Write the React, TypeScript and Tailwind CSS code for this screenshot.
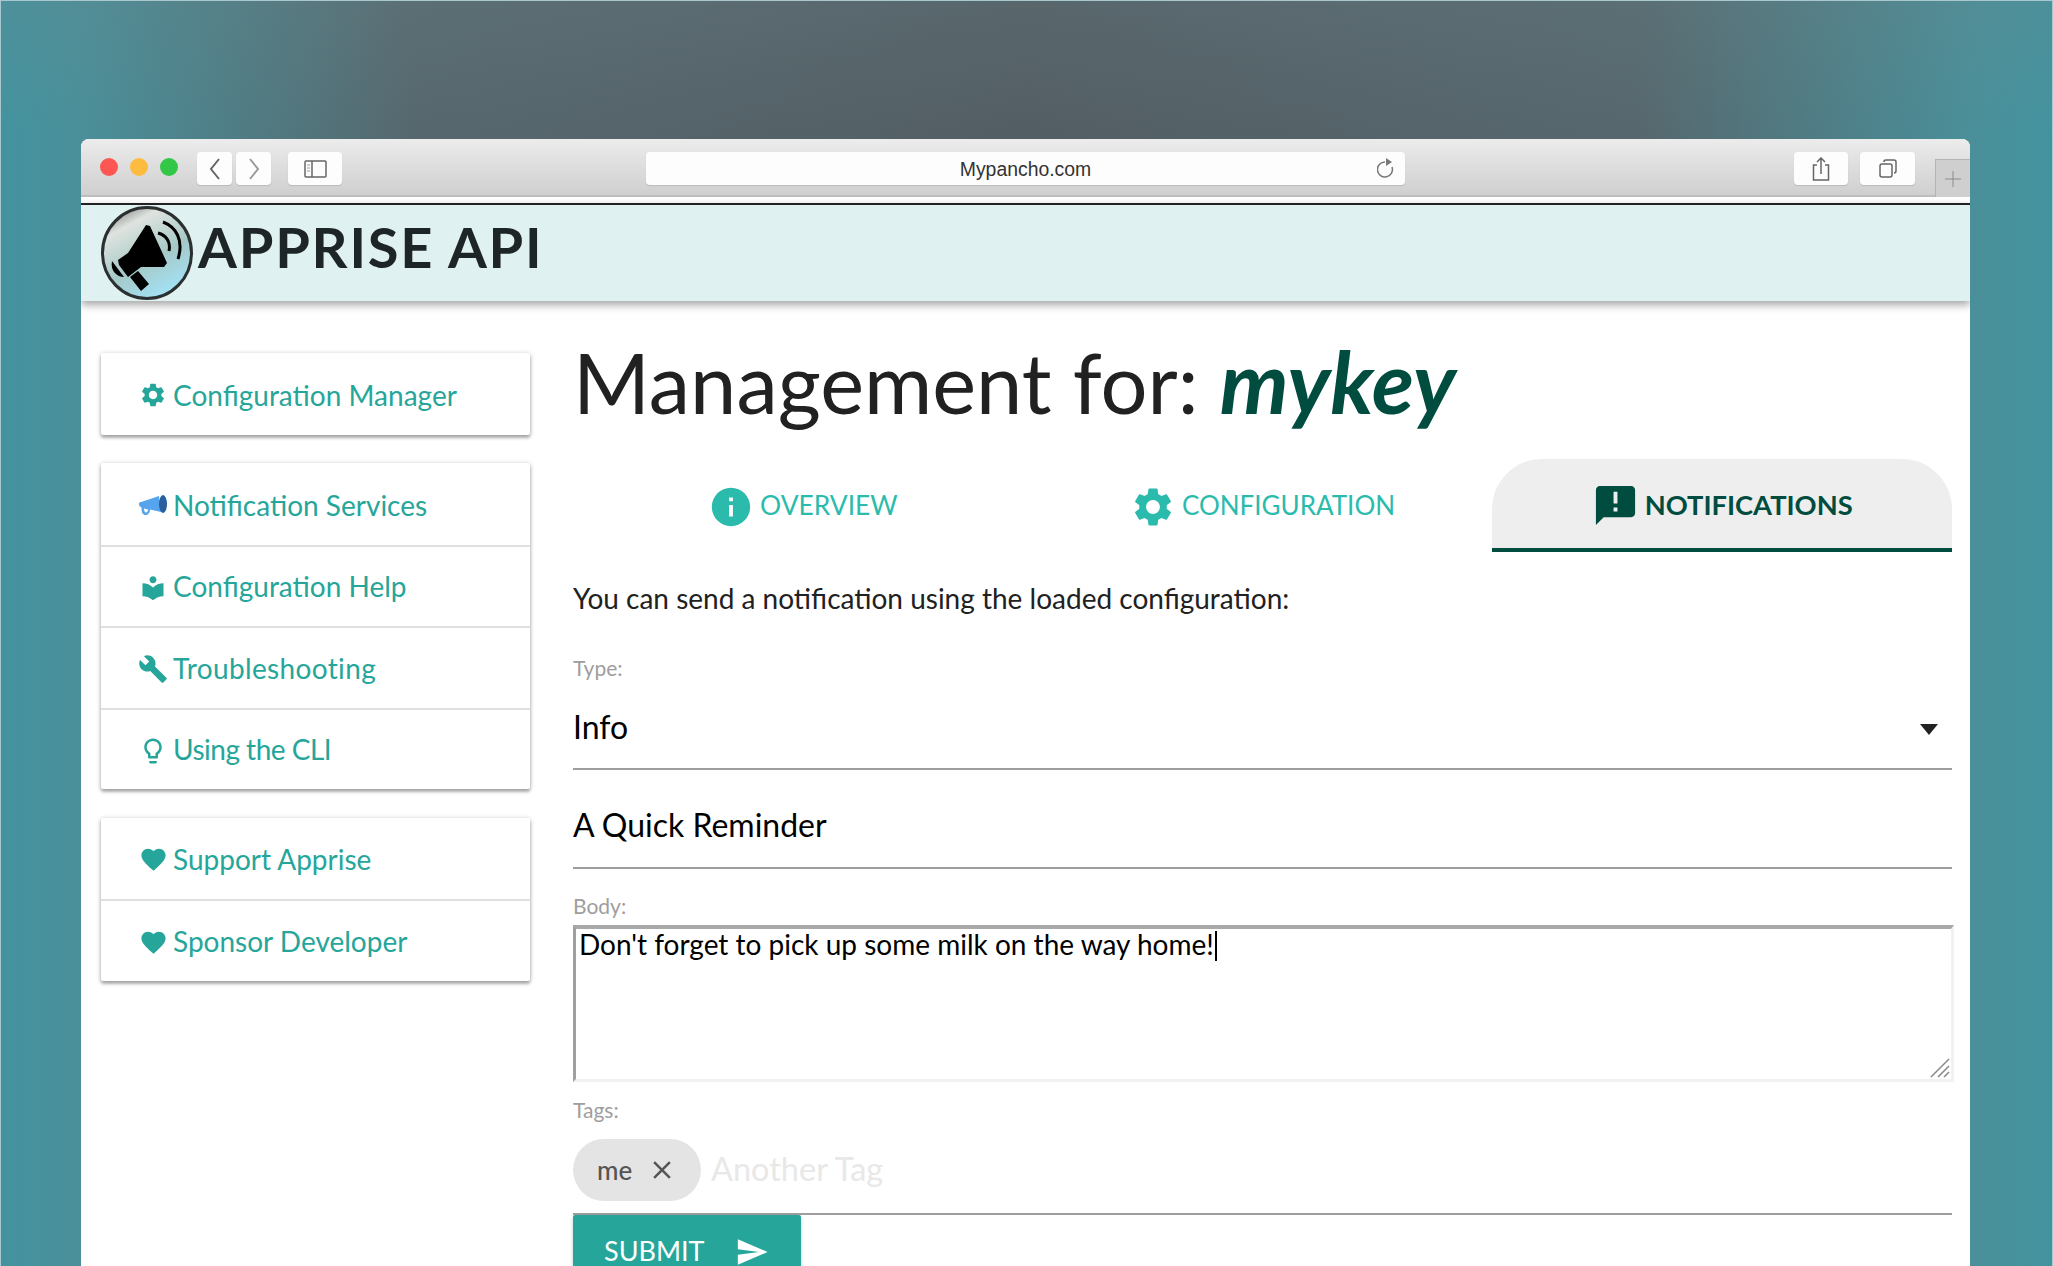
import { MdAnnouncement, MdBuild, MdClose, MdFavorite, MdInfo, MdLightbulbOutline, MdLocalLibrary, MdSend, MdSettings } from "react-icons/md";
import type { ReactNode } from "react";

function Logo() {
  return (
    <svg width="94" height="96" viewBox="0 0 94 96" className="shrink-0">
      <defs>
        <linearGradient id="lg" x1="0.15" y1="0.05" x2="0.65" y2="1">
          <stop offset="0" stopColor="#8d9290" />
          <stop offset="0.18" stopColor="#dfe3df" />
          <stop offset="0.6" stopColor="#a5c9c6" />
          <stop offset="1" stopColor="#a3e2f8" />
        </linearGradient>
      </defs>
      <ellipse cx="47" cy="48" rx="44.5" ry="45.5" fill="url(#lg)" stroke="#2b2f30" strokeWidth="3" />
      <path d="M46 20 L50 21 L67 58 L64 62 L41 62 L28 72 L19 60 L18 55 L28 48 Z" fill="#000" />
      <path d="M12 56 L24 72 C17 72 10 66 12 56 Z" fill="#000" />
      <path d="M30 72 L38 66 L49 79 L41 86 Z" fill="#000" />
      <path d="M58 28 C66 30 71 37 69 46" fill="none" stroke="#000" strokeWidth="3" />
      <path d="M63 17 C76 22 84 35 78 54" fill="none" stroke="#000" strokeWidth="3" />
    </svg>
  );
}

function Megaphone() {
  return (
    <svg width="28" height="20" viewBox="0 0 28 20" className="shrink-0">
      <path d="M0 9 C0 7.500 1 7 2 7 L20 1 L22 17 L11 14.500 C11 18 9 20 6.500 20 C4 20 2.500 18 2.500 13 L2 12 C1 12 0 11 0 9 Z" fill="#56a4ee" />
      <path d="M5 13.500 C5 16 6 17.500 7 17.500 C8 17.500 9 16.500 9 14.500" fill="#fff" />
      <ellipse cx="24" cy="9" rx="4" ry="9" fill="#27609c" />
    </svg>
  );
}

function Traffic({ color }: { color: string }) {
  return <span className={`h-[18px] w-[18px] rounded-full ${color}`} />;
}

function ChromeBtn({ className, children }: { className: string; children: ReactNode }) {
  return (
    <div className={`flex h-[33px] items-center justify-center rounded-[4px] bg-[#fdfdfd] shadow-[0_1px_1px_rgba(0,0,0,0.12)] ${className}`}>
      {children}
    </div>
  );
}

function BrowserBar() {
  return (
    <div className="flex h-[58px] items-start bg-[linear-gradient(to_bottom,#ececec,#cfcfcf)] border-b-2 border-[#bdbdbd] pl-[19px]">
      <div className="mt-[19px] flex gap-[12px]">
        <Traffic color="bg-[#fc5753]" />
        <Traffic color="bg-[#fdbc40]" />
        <Traffic color="bg-[#33c748]" />
      </div>
      <div className="ml-[19px] mt-[13px] flex gap-[4px]">
        <ChromeBtn className="w-[35px]">
          <svg width="12" height="24" viewBox="0 0 12 24" fill="none" stroke="#666" strokeWidth="2"><path d="M10 2 L2 12 L10 22" /></svg>
        </ChromeBtn>
        <ChromeBtn className="w-[35px]">
          <svg width="12" height="24" viewBox="0 0 12 24" fill="none" stroke="#999" strokeWidth="2"><path d="M2 2 L10 12 L2 22" /></svg>
        </ChromeBtn>
      </div>
      <ChromeBtn className="ml-[17px] mt-[13px] w-[54px]">
        <svg width="23" height="18" viewBox="0 0 23 18" fill="none" stroke="#666" strokeWidth="1.500">
          <rect x="1" y="1" width="21" height="16" rx="1" />
          <path d="M8 1 V17" />
          <path d="M3 5 H6 M3 8 H6 M3 11 H6" strokeWidth="1" stroke="#999" />
        </svg>
      </ChromeBtn>
      <ChromeBtn className="relative ml-[304px] mt-[13px] w-[759px]">
        <span className="mt-[2px] font-['Liberation_Sans',sans-serif] text-[19.4px] text-[#333]">Mypancho.com</span>
        <svg width="18" height="22" viewBox="0 0 18 22" fill="none" className="absolute right-[10px] top-[6px]">
          <path d="M8 4 A7.500 7.500 0 1 0 15 9" stroke="#777" strokeWidth="1.500" />
          <path d="M9 0 L15 4 L9 8 Z" fill="#777" />
        </svg>
      </ChromeBtn>
      <ChromeBtn className="ml-[389px] mt-[13px] w-[54px]">
        <svg width="18" height="24" viewBox="0 0 18 24" fill="none" stroke="#666" strokeWidth="1.500">
          <path d="M5 8 H1.500 V23 H16.500 V8 H13" />
          <path d="M9 17 V1.500 M5 5 L9 1 L13 5" />
        </svg>
      </ChromeBtn>
      <ChromeBtn className="ml-[12px] mt-[13px] w-[55px]">
        <svg width="18" height="19" viewBox="0 0 18 19" fill="none" stroke="#666" strokeWidth="1.500">
          <rect x="1" y="5" width="12" height="13" rx="2" />
          <path d="M5 3 V2.500 C5 1.500 6 1 7 1 H15 C16 1 17 2 17 3 V12 C17 13 16 14 15 14" />
        </svg>
      </ChromeBtn>
      <div className="ml-[20px] mt-[20px] flex h-[38px] w-[35px] items-center justify-center border-l border-t border-[#b4b4b4] bg-[#cfcfcf]">
        <svg width="16" height="16" viewBox="0 0 16 16" stroke="#8c8c8c" strokeWidth="1"><path d="M8 0 V16 M0 8 H16" /></svg>
      </div>
    </div>
  );
}

function NavRow({ icon, label, divider, labelClass = "" }: { icon: ReactNode; label: string; divider?: boolean; labelClass?: string }) {
  return (
    <div className={`flex h-[81.5px] items-center ${divider ? "border-t-2 border-[#e0e0e0]" : ""}`}>
      <div className="mt-[3px] flex w-[73px] shrink-0 justify-end pr-[5px]">
        <span className="flex w-[32px] justify-center text-[#26a69a]">{icon}</span>
      </div>
      <span className={`-ml-[1px] text-[28px] leading-none text-[#26a69a] ${divider ? "" : "mt-[2px]"} ${labelClass}`}>{label}</span>
    </div>
  );
}

function NavCard({ children }: { children: ReactNode }) {
  return (
    <div className="rounded-[2px] bg-white shadow-[0_3px_3px_0_rgba(0,0,0,0.22),0_1px_5px_0_rgba(0,0,0,0.28)]">
      {children}
    </div>
  );
}

function Sidebar() {
  return (
    <div className="flex w-[429px] shrink-0 flex-col gap-[28.5px] pt-[52px]">
      <NavCard>
        <NavRow icon={<MdSettings size={28} />} label="Configuration Manager" />
      </NavCard>
      <NavCard>
        <NavRow icon={<Megaphone />} label="Notification Services" />
        <NavRow divider icon={<MdLocalLibrary size={28} />} label="Configuration Help" />
        <NavRow divider icon={<MdBuild size={30} />} label="Troubleshooting" labelClass="tracking-[0.35px]" />
        <NavRow divider icon={<MdLightbulbOutline size={30} />} label="Using the CLI" labelClass="tracking-[-0.5px]" />
      </NavCard>
      <NavCard>
        <NavRow icon={<MdFavorite size={29} />} label="Support Apprise" />
        <NavRow divider icon={<MdFavorite size={29} />} label="Sponsor Developer" />
      </NavCard>
    </div>
  );
}

function Tabs() {
  return (
    <div className="grid h-[93px] grid-cols-3">
      <div className="flex items-center justify-center gap-[6px] pt-[2px] text-[#2bbbad]">
        <MdInfo size={46} />
        <span className="-mt-[3px] text-[26.4px] leading-none">OVERVIEW</span>
      </div>
      <div className="flex items-center justify-center gap-[6px] pt-[2px] text-[#2bbbad]">
        <MdSettings size={46} />
        <span className="-mt-[3px] text-[26px] leading-none">CONFIGURATION</span>
      </div>
      <div className="flex items-center justify-center gap-[6px] rounded-t-[50px] border-b-4 border-[#004d40] bg-[#eeeeee] pt-[2px] text-[#004d40]">
        <MdAnnouncement size={47} className="mt-[2px]" />
        <span className="text-[27.3px] font-bold leading-none">NOTIFICATIONS</span>
      </div>
    </div>
  );
}

function NotificationForm() {
  return (
    <div className="flex flex-col">
      <p className="mt-[26px] text-[28px] leading-[40px] text-[#212121]">You can send a notification using the loaded configuration:</p>
      <label className="mt-[36px] text-[21px] leading-[28px] text-[#9e9e9e]">Type:</label>
      <div className="mt-[25px] flex h-[63px] items-start justify-between border-b-2 border-[#9e9e9e]">
        <span className="text-[32px] leading-[40px] text-black">Info</span>
        <svg width="18" height="12" viewBox="0 0 18 12" className="mr-[14px] mt-[17px]"><path d="M0 0 H18 L9 11 Z" fill="#222" /></svg>
      </div>
      <div className="mt-[35px] h-[64px] border-b-2 border-[#9e9e9e] text-[32px] leading-[40px] text-black">A Quick Reminder</div>
      <label className="mt-[23px] text-[21px] leading-[28px] text-[#9e9e9e]">Body:</label>
      <div className="relative mr-[-2px] mt-[5px] h-[157px] border-b-[3px] border-l-[3px] border-r-[3px] border-t-[4px] border-b-[#f2f2f2] border-l-[#a0a0a0] border-r-[#f2f2f2] border-t-[#a9a9a9] pl-[3px] text-[28px] leading-[30px] text-black">
        Don't forget to pick up some milk on the way home!<span className="ml-[1px] inline-block h-[30px] w-[2px] bg-black align-[-6px]" />
        <svg width="20" height="20" viewBox="0 0 20 20" stroke="#888" strokeWidth="1.500" className="absolute bottom-[1px] right-[1px]">
          <path d="M1 19 L19 1 M8 19 L19 8 M14 19 L19 14" />
        </svg>
      </div>
      <label className="mt-[14px] text-[21px] leading-[28px] text-[#9e9e9e]">Tags:</label>
      <div className="mt-[15px] flex h-[76px] items-start border-b-2 border-[#9e9e9e]">
        <div className="flex h-[62px] w-[128px] items-center rounded-full bg-[#e4e4e4] pl-[24px] text-[#555]">
          <span className="text-[26px] font-medium leading-none">me</span>
          <MdClose size={30} className="ml-[15px]" />
        </div>
        <span className="ml-[10px] mt-[12px] text-[32.5px] leading-[36px] text-[#e8e8e8]">Another Tag</span>
      </div>
      <div className="flex h-[72px] w-[228px] items-start gap-[30px] rounded-[2px] bg-[#26a69a] pl-[31px] pt-[20px] text-white shadow-[0_2px_4px_rgba(0,0,0,0.2)]">
        <span className="text-[27px] leading-[32px]">SUBMIT</span>
        <MdSend size={34} />
      </div>
    </div>
  );
}

export default function App() {
  return (
    <div className="h-[1266px] overflow-hidden border border-b-0 border-[#a8c8cd] bg-[linear-gradient(to_bottom,rgba(110,135,140,0.22),rgba(110,135,140,0)_130px),linear-gradient(to_right,#43939f_0%,#4a8f99_4%,#56686e_20%,#535e64_50%,#56686e_80%,#4a8f99_96%,#43939f_100%)] pl-[80px] pr-[82px] pt-[138px] font-['Lato','Noto_Sans',sans-serif]">
      <div className="overflow-hidden rounded-t-[8px] bg-white">
        <BrowserBar />
        <div className="h-[6px] bg-white" />
        <div className="relative z-10 flex h-[98px] items-center border-t-2 border-[#222] bg-[#dff1f0] pl-[19px] shadow-[0_4px_8px_rgba(0,0,0,0.35)]">
          <Logo />
          <span className="mb-[12px] ml-[4px] text-[56px] font-bold leading-none tracking-[1.8px] text-[#1e2526]">APPRISE API</span>
        </div>
        <div className="flex h-[1000px] pl-[20px] pr-[18px]">
          <Sidebar />
          <div className="ml-[43px] min-w-0 flex-1">
            <h1 className="mt-[27px] h-[106px] text-[83px] font-normal leading-[106px] text-[#212121]">
              Management for: <span className="text-[87px] font-bold italic text-[#004d40]">mykey</span>
            </h1>
            <div className="mt-[25px]">
              <Tabs />
            </div>
            <NotificationForm />
          </div>
        </div>
      </div>
    </div>
  );
}
